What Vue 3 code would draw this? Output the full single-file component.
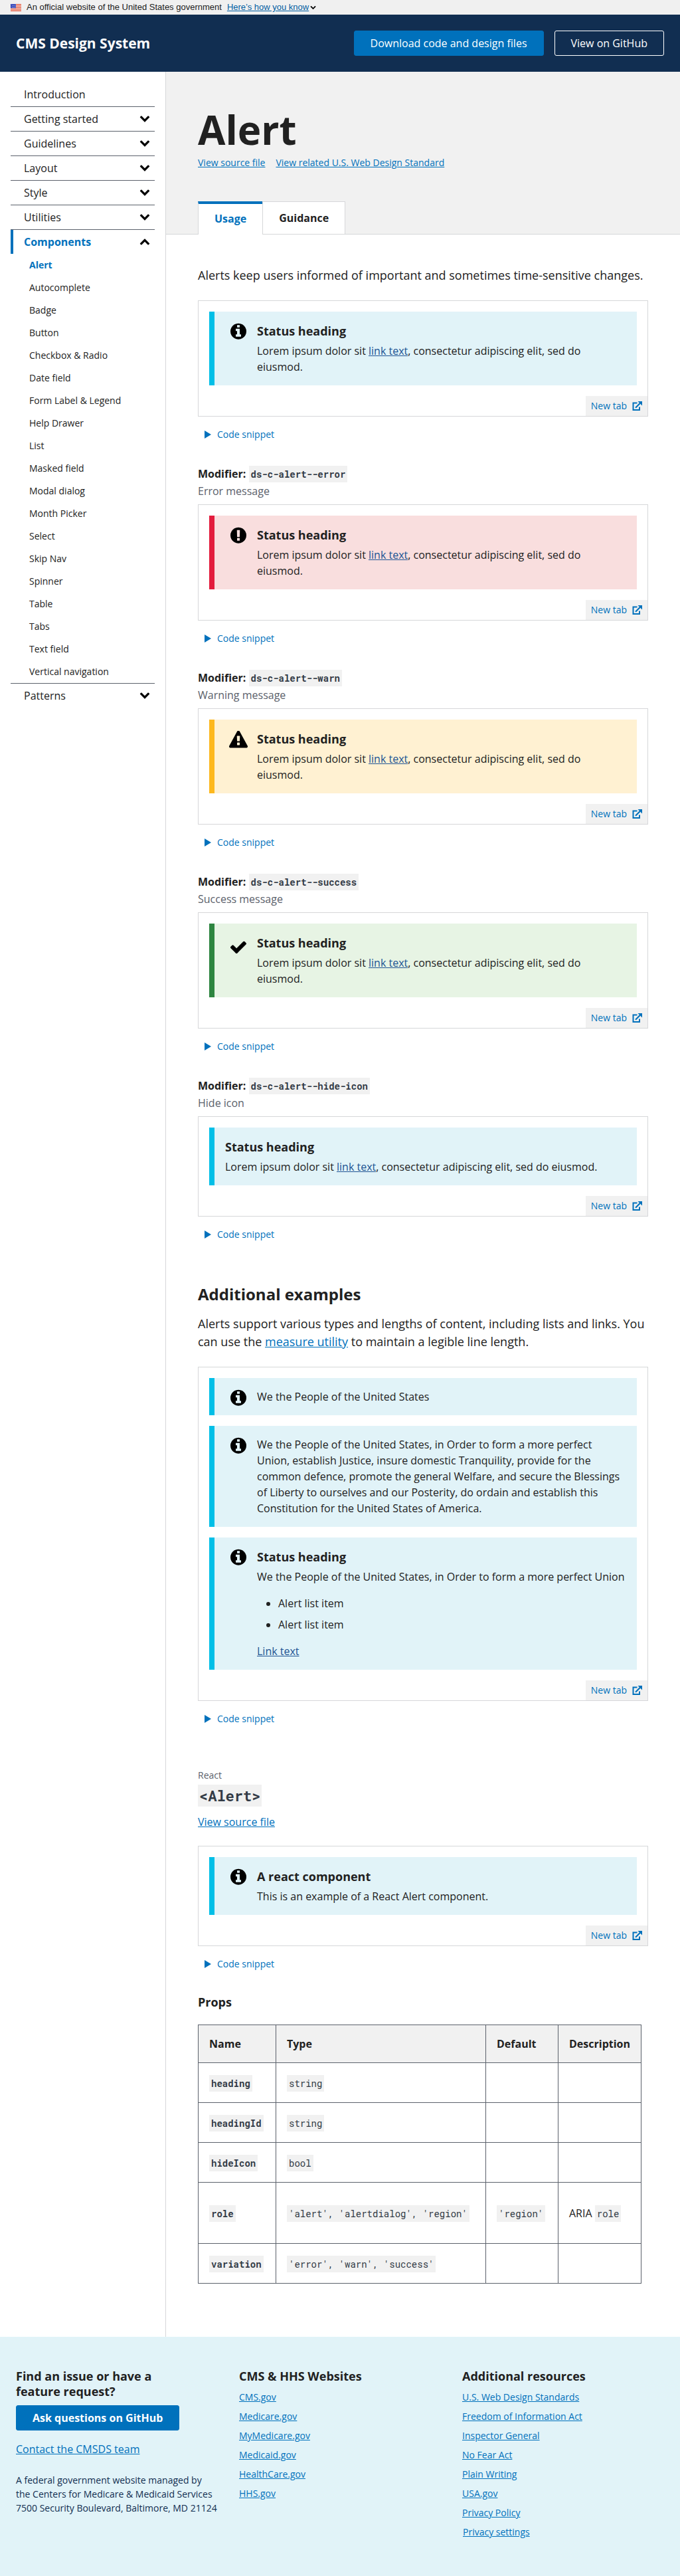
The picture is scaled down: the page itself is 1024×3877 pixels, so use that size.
<script setup>
const navTop = ['Getting started', 'Guidelines', 'Layout', 'Style', 'Utilities']
const components = [
  'Alert', 'Autocomplete', 'Badge', 'Button', 'Checkbox & Radio', 'Date field',
  'Form Label & Legend', 'Help Drawer', 'List', 'Masked field', 'Modal dialog',
  'Month Picker', 'Select', 'Skip Nav', 'Spinner', 'Table', 'Tabs', 'Text field',
  'Vertical navigation',
]
const variations = [
  { kind: 'info', icon: 'info' },
  { kind: 'error', icon: 'error', modifier: 'ds-c-alert--error', label: 'Error message' },
  { kind: 'warn', icon: 'warn', modifier: 'ds-c-alert--warn', label: 'Warning message' },
  { kind: 'success', icon: 'success', modifier: 'ds-c-alert--success', label: 'Success message' },
  { kind: 'info', icon: '', modifier: 'ds-c-alert--hide-icon', label: 'Hide icon' },
]
const props = [
  { name: 'heading', type: 'string' },
  { name: 'headingId', type: 'string' },
  { name: 'hideIcon', type: 'bool' },
  { name: 'role', type: "'alert', 'alertdialog', 'region'", fallback: "'region'", aria: true },
  { name: 'variation', type: "'error', 'warn', 'success'" },
]
const cmsSites = ['CMS.gov', 'Medicare.gov', 'MyMedicare.gov', 'Medicaid.gov', 'HealthCare.gov', 'HHS.gov']
const resources = [
  'U.S. Web Design Standards', 'Freedom of Information Act', 'Inspector General',
  'No Fear Act', 'Plain Writing', 'USA.gov', 'Privacy Policy',
]
</script>

<template>
  <div class="page">
    <svg class="sprite" aria-hidden="true">
      <symbol id="icon-info" viewBox="0 0 28 28">
        <path transform="translate(0 -1.3) scale(.015625)" d="M1152 1376v-160q0-14-9-23t-23-9h-96v-512q0-14-9-23t-23-9h-320q-14 0-23 9t-9 23v160q0 14 9 23t23 9h96v320h-96q-14 0-23 9t-9 23v160q0 14 9 23t23 9h448q14 0 23-9t9-23zm-128-896v-160q0-14-9-23t-23-9h-192q-14 0-23 9t-9 23v160q0 14 9 23t23 9h192q14 0 23-9t9-23zm640 416q0 209-103 385.5t-279.5 279.5-385.5 103-385.5-103-279.5-279.5-103-385.5 103-385.5 279.5-279.5 385.5-103 385.5 103 279.5 279.5 103 385.5z" />
      </symbol>
      <symbol id="icon-error" viewBox="0 0 28 28">
        <path transform="translate(0 -1.3) scale(.015625)" d="M896 128q209 0 385.5 103t279.5 279.5 103 385.5-103 385.5-279.5 279.5-385.5 103-385.5-103-279.5-279.5-103-385.5 103-385.5 279.5-279.5 385.5-103zm128 1247v-190q0-14-9-23.5t-22-9.5h-192q-13 0-23 10t-10 23v190q0 13 10 23t23 10h192q13 0 22-9.5t9-23.5zm-2-344l18-621q0-12-10-18-10-8-24-8h-220q-14 0-24 8-10 6-10 18l17 621q0 10 10 17.5t24 7.5h185q14 0 23.5-7.5t10.5-17.5z" />
      </symbol>
      <symbol id="icon-warn" viewBox="0 0 28 28">
        <path transform="translate(0 -.5) scale(.015625)" d="M1024 1375v-190q0-14-9.5-23.5t-22.5-9.5h-192q-13 0-22.5 9.5t-9.5 23.5v190q0 14 9.5 23.5t22.5 9.5h192q13 0 22.5-9.5t9.5-23.5zm-2-374l18-459q0-12-10-19-13-11-24-11h-220q-11 0-24 11-10 7-10 21l17 457q0 10 10 16.5t24 6.5h185q14 0 23.5-6.5t10.5-16.5zm-14-934l768 1408q35 63-2 126-17 29-46.5 46t-63.5 17h-1536q-34 0-63.5-17t-46.5-46q-37-63-2-126l768-1408q17-31 47-49t65-18 65 18 47 49z" />
      </symbol>
      <symbol id="icon-success" viewBox="0 0 28 28">
        <path transform="translate(.1 4.5) scale(.0155)" d="M1671 566q0 40-28 68l-724 724-136 136q-28 28-68 28t-68-28l-136-136-362-362q-28-28-28-68t28-68l136-136q28-28 68-28t68 28l294 295 656-657q28-28 68-28t68 28l136 136q28 28 28 68z" />
      </symbol>
      <symbol id="icon-chevron" viewBox="0 154 1792 1792">
        <path d="M1683 808l-742 741q-19 19-45 19t-45-19l-742-741q-19-19-19-45.5t19-45.5l166-165q19-19 45-19t45 19l531 531 531-531q19-19 45-19t45 19l166 165q19 19 19 45.5t-19 45.5z" />
      </symbol>
      <symbol id="icon-external" viewBox="0 0 15 15">
        <path d="M7.5 2.5H1.5V13H11V8.5" fill="none" stroke="currentColor" stroke-width="2" />
        <path d="M5 9.7L12 2.8" fill="none" stroke="currentColor" stroke-width="2.2" />
        <path d="M8.5 0H15V6.5z" fill="currentColor" />
      </symbol>
    </svg>

    <div class="banner">
      <svg class="flag" viewBox="0 0 16 11" aria-hidden="true">
        <rect width="16" height="11" fill="#fff" />
        <path d="M0 .5h16M0 2.2h16M0 3.9h16M0 5.6h16M0 7.3h16M0 9h16M0 10.6h16" stroke="#db3e1f" stroke-width=".9" />
        <rect width="8" height="6.2" fill="#1e33b1" />
        <path d="M1 1.2h7M2 2.6h6M1 4h7M2 5.3h6" stroke="#fff" stroke-width=".8" stroke-dasharray=".8 1.2" />
      </svg>
      <span>An official website of the United States government</span>
      <button class="banner-toggle" type="button">
        <span>Here’s how you know</span>
        <svg class="banner-chevron" aria-hidden="true"><use href="#icon-chevron" /></svg>
      </button>
    </div>

    <header class="header">
      <a class="brand" href="#">CMS Design System</a>
      <div class="header-actions">
        <a class="btn btn-primary" href="#">Download code and design files</a>
        <a class="btn btn-inverse" href="#">View on GitHub</a>
      </div>
    </header>

    <div class="layout">
      <nav class="sidebar" aria-label="Design system">
        <ul>
          <li><a class="nav-item" href="#">Introduction</a></li>
          <li v-for="item in navTop" :key="item">
            <button class="nav-item" type="button">
              {{ item }}
              <svg class="chevron" aria-hidden="true"><use href="#icon-chevron" /></svg>
            </button>
          </li>
          <li>
            <button class="nav-item nav-open" type="button" aria-expanded="true">
              Components
              <svg class="chevron chevron-up" aria-hidden="true"><use href="#icon-chevron" /></svg>
            </button>
            <ul class="subnav">
              <li v-for="(item, i) in components" :key="item">
                <a href="#" :class="{ current: i === 0 }">{{ item }}</a>
              </li>
            </ul>
          </li>
          <li>
            <button class="nav-item" type="button">
              Patterns
              <svg class="chevron" aria-hidden="true"><use href="#icon-chevron" /></svg>
            </button>
          </li>
        </ul>
      </nav>

      <main class="main">
        <div class="masthead">
          <h1>Alert</h1>
          <div class="source-links">
            <a href="#">View source file</a>
            <a href="#">View related U.S. Web Design Standard</a>
          </div>
          <div class="tabs" role="tablist">
            <button class="tab tab-active" type="button" role="tab" aria-selected="true">Usage</button>
            <button class="tab" type="button" role="tab" aria-selected="false">Guidance</button>
          </div>
        </div>

        <div class="content">
          <p class="lead">Alerts keep users informed of important and sometimes time-sensitive changes.</p>

          <section v-for="(v, i) in variations" :key="i" class="example">
            <div v-if="v.modifier" class="example-head">
              <h4>Modifier: <code>{{ v.modifier }}</code></h4>
              <p>{{ v.label }}</p>
            </div>
            <div class="preview">
              <div class="alert" :class="'alert-' + v.kind">
                <svg v-if="v.icon" class="alert-icon" aria-hidden="true"><use :href="'#icon-' + v.icon" /></svg>
                <div class="alert-body">
                  <h3>Status heading</h3>
                  <p>Lorem ipsum dolor sit <a href="#">link text</a>, consectetur adipiscing elit, sed do eiusmod.</p>
                </div>
              </div>
              <a class="new-tab" href="#">New tab <svg aria-hidden="true"><use href="#icon-external" /></svg></a>
            </div>
            <button class="snippet" type="button">Code snippet</button>
          </section>

          <section class="additional">
            <h2>Additional examples</h2>
            <p class="lead">Alerts support various types and lengths of content, including lists and links. You can use the <a href="#">measure utility</a> to maintain a legible line length.</p>
            <div class="preview">
              <div class="alert alert-info">
                <svg class="alert-icon" aria-hidden="true"><use href="#icon-info" /></svg>
                <div class="alert-body"><p>We the People of the United States</p></div>
              </div>
              <div class="alert alert-info">
                <svg class="alert-icon" aria-hidden="true"><use href="#icon-info" /></svg>
                <div class="alert-body">
                  <p>We the People of the United States, in Order to form a more perfect Union, establish Justice, insure domestic Tranquility, provide for the common defence, promote the general Welfare, and secure the Blessings of Liberty to ourselves and our Posterity, do ordain and establish this Constitution for the United States of America.</p>
                </div>
              </div>
              <div class="alert alert-info">
                <svg class="alert-icon" aria-hidden="true"><use href="#icon-info" /></svg>
                <div class="alert-body">
                  <h3>Status heading</h3>
                  <p>We the People of the United States, in Order to form a more perfect Union</p>
                  <ul>
                    <li>Alert list item</li>
                    <li>Alert list item</li>
                  </ul>
                  <p><a href="#">Link text</a></p>
                </div>
              </div>
              <a class="new-tab" href="#">New tab <svg aria-hidden="true"><use href="#icon-external" /></svg></a>
            </div>
            <button class="snippet" type="button">Code snippet</button>
          </section>

          <section class="react">
            <p class="eyebrow">React</p>
            <h2 class="component-name"><code>&lt;Alert&gt;</code></h2>
            <p class="source"><a href="#">View source file</a></p>
            <div class="preview">
              <div class="alert alert-info">
                <svg class="alert-icon" aria-hidden="true"><use href="#icon-info" /></svg>
                <div class="alert-body">
                  <h3>A react component</h3>
                  <p>This is an example of a React Alert component.</p>
                </div>
              </div>
              <a class="new-tab" href="#">New tab <svg aria-hidden="true"><use href="#icon-external" /></svg></a>
            </div>
            <button class="snippet" type="button">Code snippet</button>
          </section>

          <section class="props">
            <h3>Props</h3>
            <table>
              <thead>
                <tr>
                  <th class="col-name" scope="col">Name</th>
                  <th class="col-type" scope="col">Type</th>
                  <th class="col-default" scope="col">Default</th>
                  <th class="col-description" scope="col">Description</th>
                </tr>
              </thead>
              <tbody>
                <tr v-for="p in props" :key="p.name" :class="{ described: p.aria }">
                  <th scope="row"><code>{{ p.name }}</code></th>
                  <td><code>{{ p.type }}</code></td>
                  <td><code v-if="p.fallback">{{ p.fallback }}</code></td>
                  <td><p v-if="p.aria">ARIA <code>role</code></p></td>
                </tr>
              </tbody>
            </table>
          </section>
        </div>
      </main>
    </div>

    <footer class="footer">
      <div>
        <h2>Find an issue or have a feature request?</h2>
        <a class="btn btn-primary btn-strong" href="#">Ask questions on GitHub</a>
        <p class="contact"><a href="#">Contact the CMSDS team</a></p>
        <p class="address">
          A federal government website managed by<br />
          the Centers for Medicare &amp; Medicaid Services<br />
          7500 Security Boulevard, Baltimore, MD 21124
        </p>
      </div>
      <div>
        <h2>CMS &amp; HHS Websites</h2>
        <ul>
          <li v-for="site in cmsSites" :key="site"><a href="#">{{ site }}</a></li>
        </ul>
      </div>
      <div>
        <h2>Additional resources</h2>
        <ul>
          <li v-for="item in resources" :key="item"><a href="#">{{ item }}</a></li>
          <li><button class="settings" type="button">Privacy settings</button></li>
        </ul>
      </div>
    </footer>
  </div>
</template>

<style>
body {
  margin: 0;
  background: #fff;
}
</style>

<style scoped>
* {
  box-sizing: border-box;
}
.page {
  font-family: "Open Sans", "Noto Sans", sans-serif;
  font-size: 16px;
  line-height: 24px;
  color: #212121;
}
h1, h2, h3, h4, p, ul {
  margin: 0;
  padding: 0;
}
ul {
  list-style: none;
}
a {
  color: #0071bc;
}
button {
  margin: 0;
  padding: 0;
  border: 0;
  background: none;
  color: inherit;
  font: inherit;
  cursor: pointer;
}
code {
  padding: 3px;
  background: #f1f1f1;
  color: #323a45;
  font-family: "Roboto Mono", "Liberation Mono", monospace;
  font-size: 14px;
  line-height: 1;
}
.sprite {
  display: none;
}

/* Government banner */
.banner {
  display: flex;
  align-items: center;
  gap: 8px;
  height: 22px;
  padding: 0 16px;
  background: #f0f0f0;
  font-family: "Liberation Sans", Arial, sans-serif;
  font-size: 13px;
  line-height: 22px;
}
.flag {
  width: 16px;
  height: 11px;
}
.banner-toggle {
  display: flex;
  align-items: center;
  gap: 2px;
  color: #005ea2;
}
.banner-toggle span {
  text-decoration: underline;
}
.banner-chevron {
  width: 9px;
  height: 9px;
  fill: #000;
}

/* Site header */
.header {
  display: flex;
  align-items: center;
  justify-content: space-between;
  padding: 24px;
  background: #112e51;
}
.brand {
  color: #fff;
  font-size: 21px;
  font-weight: 700;
  text-decoration: none;
}
.header-actions {
  display: flex;
  gap: 16px;
}
.btn {
  display: inline-block;
  padding: 6px 24px;
  border: 1px solid transparent;
  border-radius: 3px;
  text-decoration: none;
}
.btn-primary {
  border-color: #0071bc;
  background: #0071bc;
  color: #fff;
}
.btn-inverse {
  border-color: #fff;
  color: #fff;
}
.btn-strong {
  font-weight: 700;
}

/* Sidebar */
.layout {
  display: grid;
  grid-template-columns: 250px minmax(0, 1fr);
}
.sidebar {
  padding: 16px;
  border-right: 1px solid #d6d7d9;
}
.sidebar > ul > li + li {
  border-top: 1px solid #5b616b;
}
.nav-item {
  display: flex;
  align-items: center;
  justify-content: space-between;
  width: 100%;
  padding: 6px 7px 6px 16px;
  border-left: 4px solid transparent;
  color: #212121;
  text-align: left;
  text-decoration: none;
}
.nav-open {
  border-left-color: #0071bc;
  color: #0071bc;
  font-weight: 700;
}
.chevron {
  width: 16px;
  height: 16px;
  fill: #000;
}
.chevron-up {
  transform: rotate(180deg);
}
.subnav a {
  display: block;
  padding: 5px 0 5px 28px;
  color: #212121;
  font-size: 14px;
  text-decoration: none;
}
.subnav .current {
  color: #0071bc;
  font-weight: 700;
}

/* Page masthead */
.masthead {
  padding: 48px 48px 0;
  border-bottom: 1px solid #d6d7d9;
  background: #f1f1f1;
}
h1 {
  font-size: 60px;
  line-height: 78px;
}
.source-links {
  display: flex;
  gap: 16px;
  font-size: 14px;
  line-height: 21px;
}
.tabs {
  display: flex;
  margin: 48px 0 -1px;
}
.tab {
  height: 50px;
  padding: 0 24px;
  border: 1px solid #d6d7d9;
  background: #fff;
  font-weight: 700;
}
.tab-active {
  border-width: 4px 0 0 1px;
  border-top-color: #0071bc;
  padding-bottom: 3px;
  color: #0071bc;
}

/* Article */
.content {
  padding: 48px 48px 80px;
}
.lead {
  margin-bottom: 24px;
  font-size: 18px;
  line-height: 27px;
}
.example + .example {
  margin-top: 37px;
}
.example-head {
  margin-bottom: 8px;
}
.example-head h4 {
  margin-bottom: 2px;
}
.example-head p {
  color: #5b616b;
}
.preview {
  display: flex;
  flex-direction: column;
  gap: 16px;
  padding-top: 16px;
  border: 1px solid #d6d7d9;
}
.alert {
  display: flex;
  align-items: flex-start;
  margin: 0 16px;
  padding: 16px;
  border-left: 8px solid;
}
.alert-info {
  border-color: #02bfe7;
  background: #e1f3f8;
}
.alert-error {
  border-color: #e31c3d;
  background: #f9dede;
}
.alert-warn {
  border-color: #fdb81e;
  background: #fff1d2;
}
.alert-success {
  border-color: #2e8540;
  background: #e7f4e4;
}
.alert-icon {
  flex: none;
  width: 28px;
  height: 28px;
  margin: 1px 14px -5px 6px;
}
.alert-body h3 {
  margin-bottom: 4px;
  font-size: 18px;
  line-height: 27px;
}
.alert-body a {
  color: #205493;
}
.alert-body ul {
  display: grid;
  gap: 8px;
  margin: 16px 0;
  padding-left: 32px;
  list-style: disc;
}
.new-tab {
  display: flex;
  align-items: center;
  align-self: flex-end;
  gap: 8px;
  height: 30px;
  padding: 0 8px;
  background: #f1f1f1;
  font-size: 14px;
  text-decoration: none;
}
.new-tab svg {
  width: 15px;
  height: 15px;
}
.snippet {
  display: flex;
  align-items: center;
  gap: 9px;
  margin-top: 16px;
  padding-left: 10px;
  color: #0071bc;
  font-size: 14px;
  line-height: 21px;
}
.snippet::before {
  content: "";
  border: 6px solid transparent;
  border-right: 0;
  border-left: 10px solid #0071bc;
}
.additional,
.react {
  margin-top: 64px;
}
.additional h2 {
  margin-bottom: 16px;
  font-size: 24px;
  line-height: 31px;
}
.eyebrow {
  color: #5b616b;
  font-size: 14px;
  line-height: 21px;
}
.component-name {
  margin-bottom: 8px;
  line-height: 40px;
}
.component-name code {
  padding: 2px;
  font-size: 22px;
}
.source {
  margin-bottom: 24px;
}
.props {
  margin-top: 34px;
}
.props h3 {
  margin-bottom: 20px;
  font-size: 18px;
  line-height: 27px;
}
table {
  border-collapse: collapse;
}
th, td {
  height: 60px;
  padding: 0 16px;
  border: 1px solid #5b616b;
  text-align: left;
}
thead th {
  height: 57px;
  background: #f1f1f1;
}
.described td {
  height: 92px;
}
.col-name {
  width: 117px;
}
.col-type {
  width: 316px;
}
.col-default {
  width: 109px;
}
.col-description {
  width: 125px;
}

/* Footer */
.footer {
  display: grid;
  grid-template-columns: repeat(3, minmax(0, 1fr));
  gap: 32px;
  padding: 48px 24px 56px;
  background: #e1f3f8;
}
.footer h2 {
  margin-bottom: 9px;
  padding-right: 32px;
  font-size: 18px;
  line-height: 23px;
}
.contact {
  margin: 16px 0 24px;
}
.address {
  color: #112e51;
  font-size: 14px;
  line-height: 21px;
}
.footer ul {
  display: grid;
  gap: 8px;
  font-size: 14px;
  line-height: 21px;
}
.settings {
  display: block;
  padding: 0 1px;
  color: #0071bc;
  text-decoration: underline;
}
</style>
